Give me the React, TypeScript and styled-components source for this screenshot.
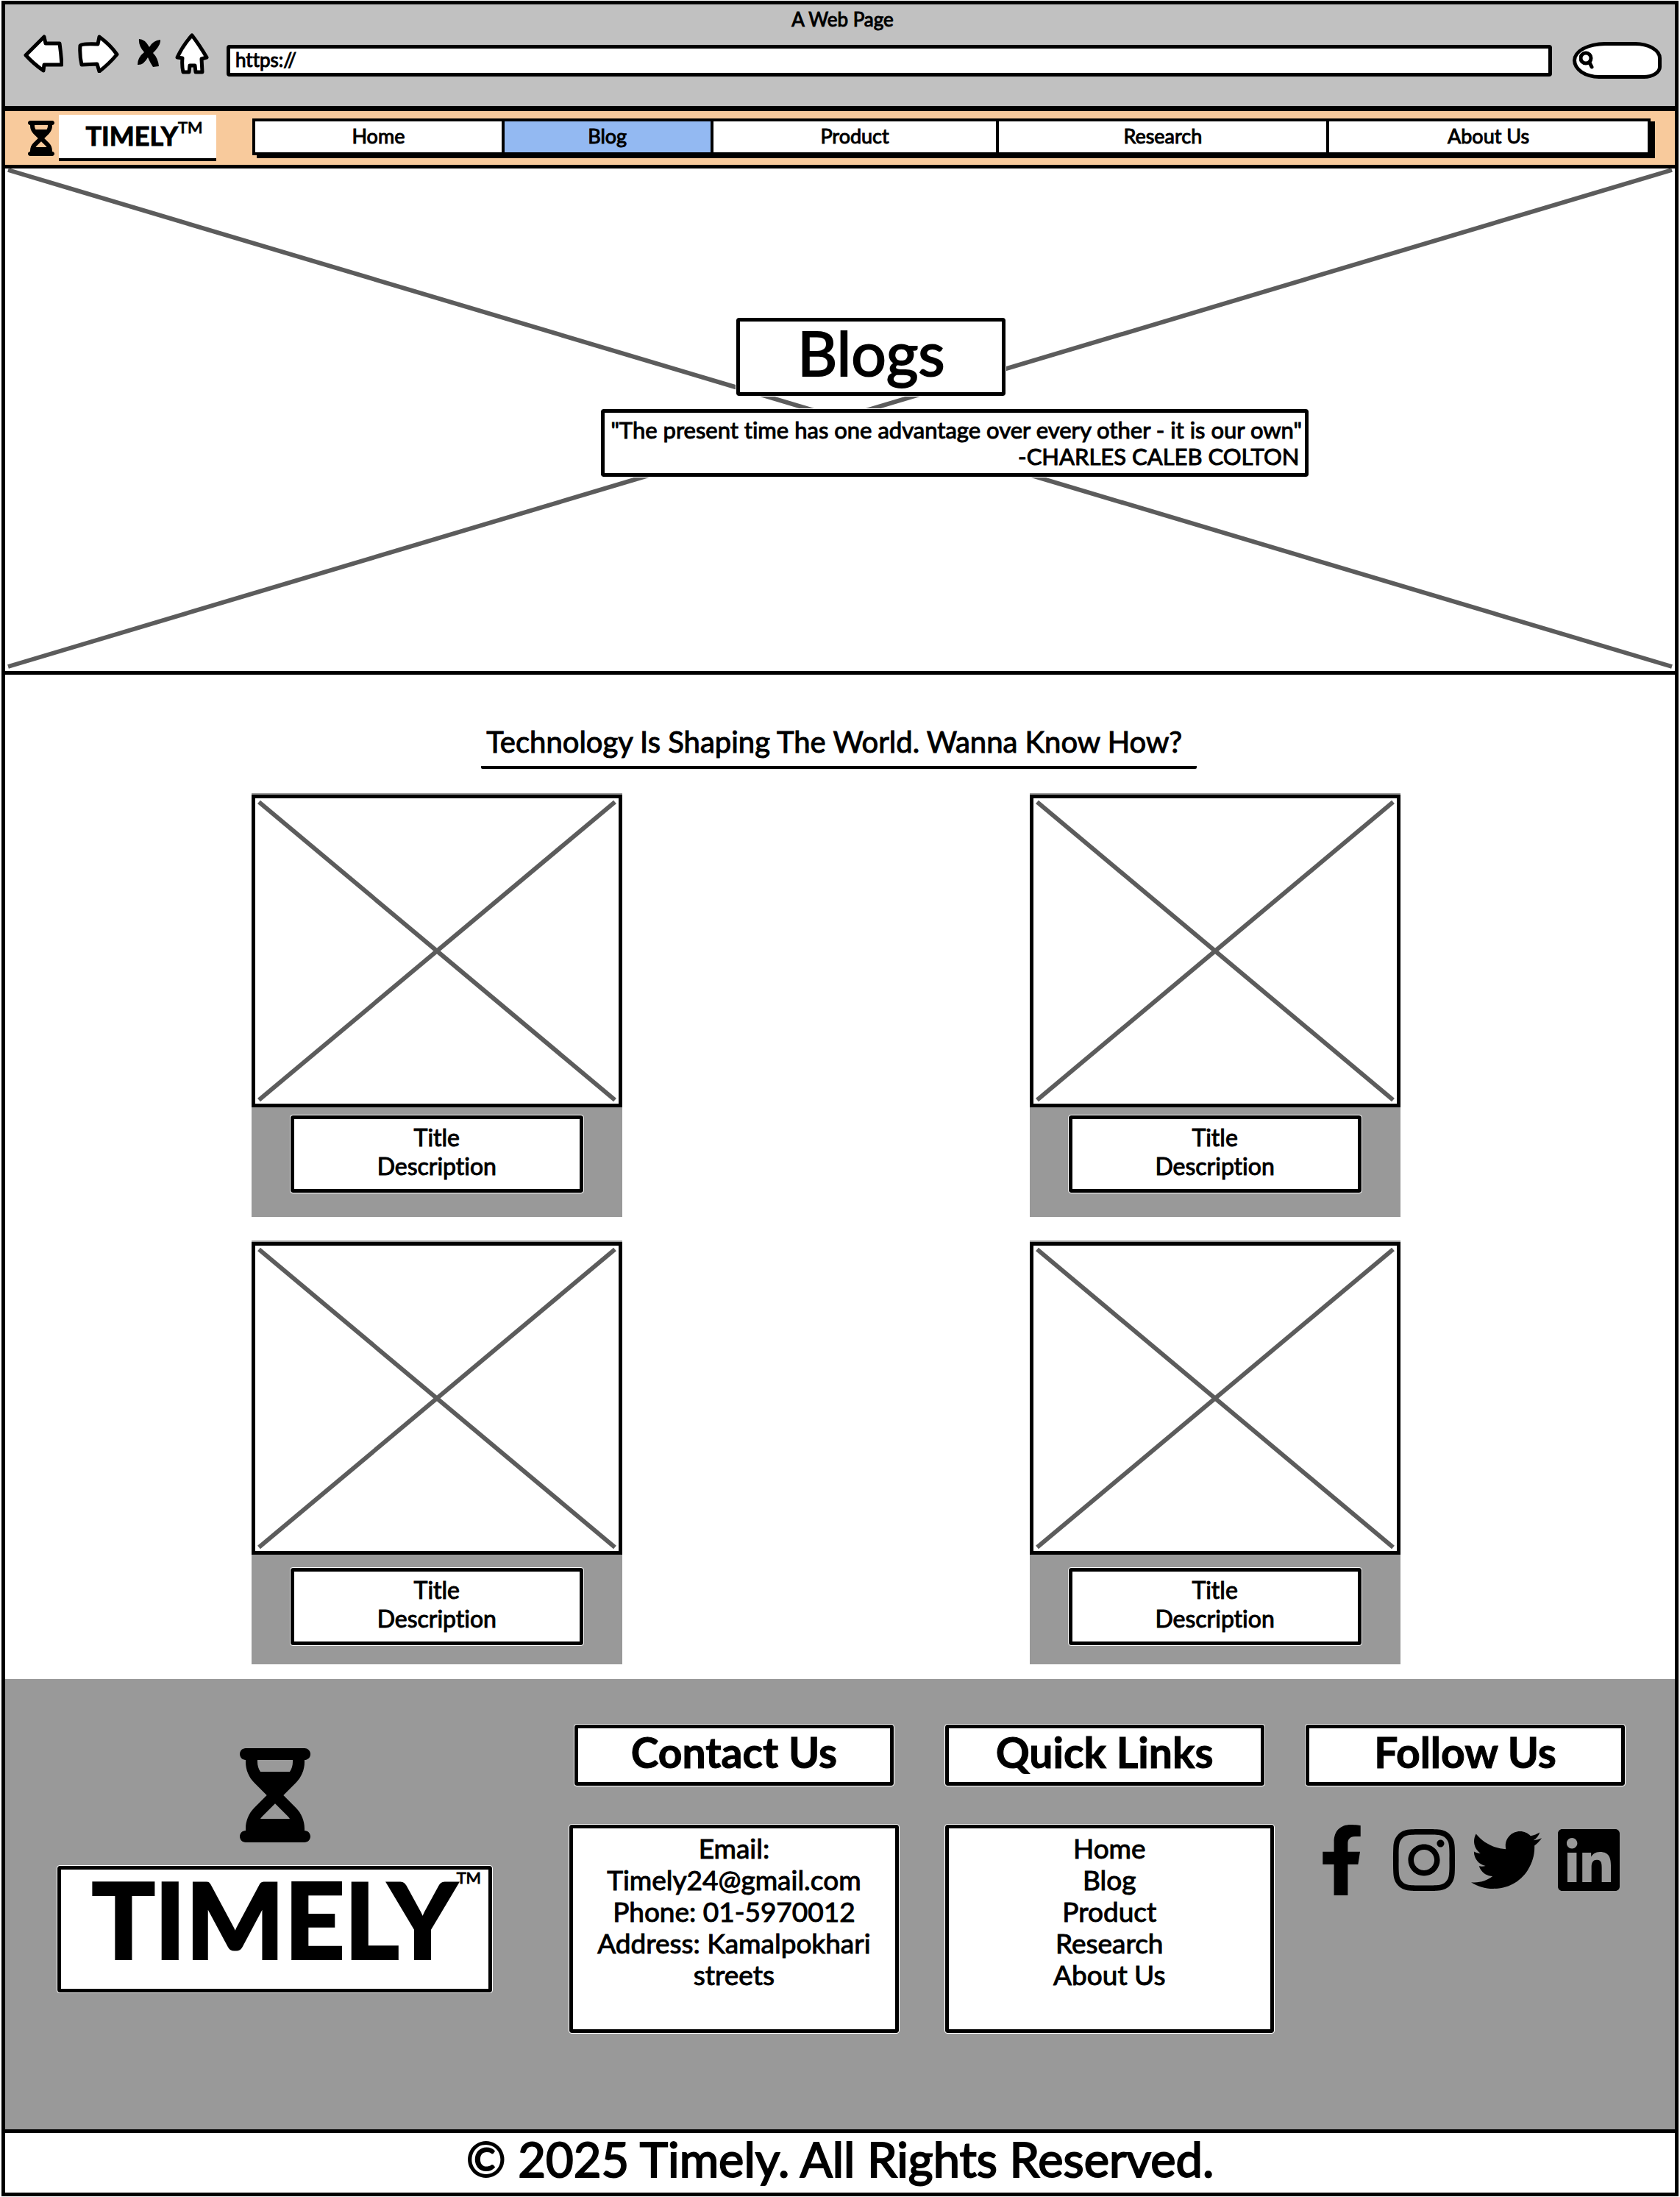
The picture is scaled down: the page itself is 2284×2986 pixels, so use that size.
import React, { useState } from 'react';
import styled, { createGlobalStyle } from 'styled-components';
import { FaHourglassHalf } from 'react-icons/fa6';
import { FaFacebookF, FaInstagram, FaTwitter, FaLinkedin } from 'react-icons/fa';

const ink = '#000';
const paper = '#fff';
const chromeGrey = '#c1c1c1';
const panelGrey = '#999';
const peach = '#f8ca9c';
const sky = '#93b9f2';
const crossGrey = '#5c5c5c';

const GlobalStyle = createGlobalStyle`
  *, *::before, *::after { box-sizing: border-box; }
  body {
    margin: 0;
    background: ${paper};
    color: ${ink};
    font-family: Lato, "Open Sans", sans-serif;
    font-weight: 400;
    font-variant-ligatures: none;
    -webkit-text-stroke: 1px ${ink};
  }
  h1, h2, h3, p, ul, blockquote { margin: 0; padding: 0; font-size: inherit; font-weight: inherit; }
  ul { list-style: none; }
  a { color: inherit; text-decoration: none; }
  button { padding: 0; border: 0; background: none; cursor: pointer; }
  input { font: inherit; color: inherit; }
`;

const Page = styled.div`
  margin: 1px 2px 0;
  border: 5px solid ${ink};
  border-bottom: 0;
`;

const Chrome = styled.header`
  padding: 4px 18px 22px 25px;
  background: ${chromeGrey};
  border-bottom: 7px solid ${ink};
`;

const PageTitle = styled.p`
  font-size: 26px;
  line-height: 32px;
  text-align: center;
`;

const Toolbar = styled.div`
  display: flex;
  align-items: center;
  height: 80px;
`;

const ToolButtons = styled.div`
  display: flex;
  align-items: center;
  gap: 20px;
  margin: 0 24px 18px 0;

  svg { display: block; }
`;

const AddressInput = styled.input`
  flex: 1;
  min-width: 0;
  height: 43px;
  padding: 0 7px 2px;
  border: 5px solid ${ink};
  border-radius: 4px;
  background: ${paper};
  font-size: 26px;
`;

const SearchBox = styled.label`
  display: flex;
  align-items: center;
  width: 121px;
  height: 50px;
  margin-left: 28px;
  padding-left: 4px;
  border: 5px solid ${ink};
  border-radius: 44px 36px 24px 36px / 25px 22px 16px 25px;
  background: ${paper};

  input {
    width: 70px;
    border: 0;
    background: none;
    font-size: 26px;
    outline: 0;
  }
`;

const NavBar = styled.nav`
  display: flex;
  align-items: center;
  height: 78px;
  padding: 0 33px 0 31px;
  background: ${peach};
  border-bottom: 5px solid ${ink};
`;

const Hourglass = styled(FaHourglassHalf)<{ $height: number }>`
  display: block;
  flex: none;
  height: ${(p) => p.$height}px;
  width: ${(p) => p.$height * 0.75}px;
`;

const Brand = styled.a`
  display: flex;
  flex: none;
  justify-content: center;
  align-items: flex-start;
  width: 214px;
  height: 63px;
  margin: 0 49px 0 6px;
  padding: 6px 0 0 18px;
  background: ${paper};
  border-bottom: 4px solid ${ink};
`;

const BrandName = styled.span<{ $size: number; $line: number; $stroke: number }>`
  font-size: ${(p) => p.$size}px;
  line-height: ${(p) => p.$line}px;
  font-weight: 700;
  -webkit-text-stroke-width: ${(p) => p.$stroke}px;
`;

const TradeMark = styled.span<{ $size: number }>`
  font-size: ${(p) => p.$size}px;
  line-height: 22px;
`;

const Menu = styled.ul`
  display: grid;
  flex: 1;
  grid-template-columns: 335fr 284fr 389fr 449fr 437fr;
  height: 50px;
  margin-bottom: 4px;
  border: 4px solid ${ink};
  box-shadow: 6px 4px 0 ${ink};
  background: ${paper};
`;

const MenuItem = styled.li<{ $active?: boolean }>`
  background: ${(p) => (p.$active ? sky : paper)};
  font-size: 27px;
  line-height: 40px;
  text-align: center;

  & + & { border-left: 4px solid ${ink}; }
  a { display: block; }
`;

const Hero = styled.section`
  position: relative;
  height: 688px;
  padding: 203px 0 0 35.7%;
  border-bottom: 5px solid ${ink};
`;

const CrossLayer = styled.div<{ $pad: string }>`
  position: absolute;
  inset: 0;
  padding: ${(p) => p.$pad};

  svg { display: block; width: 100%; height: 100%; overflow: visible; }
`;

const Panel = styled.div`
  border: 5px solid ${ink};
  border-radius: 3px;
  outline: 1px solid ${paper};
  background: ${paper};
`;

const HeroTitle = styled(Panel)`
  position: relative;
  width: 366px;
  height: 106px;
  margin: 0 0 18px 184px;

  h1 {
    font-size: 84px;
    line-height: 84px;
    text-align: center;
    -webkit-text-stroke-width: 2px;
  }
`;

const Quote = styled(Panel)`
  position: relative;
  width: 962px;
  height: 92px;
  padding: 5px 8px 0;
  font-size: 31px;
  line-height: 36px;
  text-align: right;
  white-space: nowrap;
`;

const Posts = styled.main`
  padding: 67px 16.45% 20px 14.75%;
`;

const TitleRow = styled.div`
  display: flex;
  justify-content: center;
  margin-bottom: 33px;
  padding-left: 36px;
`;

const SectionTitle = styled.h2`
  padding: 0 20px 9px 7px;
  border-bottom: 4px solid ${ink};
  border-radius: 2px;
  font-size: 40px;
  line-height: 48px;
  white-space: nowrap;
`;

const CardGrid = styled.div`
  display: grid;
  grid-template-columns: 504px 504px;
  justify-content: space-between;
  row-gap: 32px;
`;

const Card = styled.article`
  height: 576px;
  padding-top: 2px;
  background: ${panelGrey};
`;

const CardImage = styled.div`
  position: relative;
  height: 425px;
  border: 5px solid ${ink};
  background: ${paper};
`;

const CardText = styled(Panel)<{ $drop: number }>`
  width: 398px;
  height: 105px;
  margin: ${(p) => p.$drop}px auto 0;
  padding-top: 5px;
  font-size: 32px;
  line-height: 39px;
  text-align: center;
`;

const Footer = styled.footer`
  display: grid;
  grid-template-columns: 592fr 530fr 448fr 434fr;
  column-gap: 43px;
  height: 612px;
  padding: 62px 68px 0 71px;
  background: ${panelGrey};
`;

const FooterBrand = styled.div`
  display: flex;
  flex-direction: column;
  align-items: center;
  gap: 32px;
  padding-top: 32px;
`;

const BrandPanel = styled(Panel)`
  display: flex;
  justify-content: center;
  align-items: flex-start;
  width: 100%;
  height: 172px;
  padding-left: 32px;
`;

const FooterColumn = styled.div<{ $align: string; $pad?: string }>`
  display: flex;
  flex-direction: column;
  align-items: ${(p) => p.$align};
  gap: 53px;
  padding: ${(p) => p.$pad ?? '0'};
`;

const FooterHeading = styled(Panel)`
  width: 434px;
  height: 83px;

  h3 {
    font-size: 57px;
    font-weight: 700;
    line-height: 64px;
    text-align: center;
  }
`;

const FooterPanel = styled(Panel)`
  width: 100%;
  height: 283px;
  padding-top: 5px;
  font-size: 37px;
  line-height: 43px;
  text-align: center;
`;

const Socials = styled.div`
  display: grid;
  grid-template-columns: repeat(4, 96px);
  column-gap: 16px;

  a { display: flex; justify-content: center; }
  svg { height: 96px; width: auto; }
`;

const Copyright = styled.p`
  padding-bottom: 11px;
  border: solid ${ink};
  border-width: 5px 0;
  font-size: 65px;
  line-height: 70px;
  text-align: center;
  -webkit-text-stroke-width: 2px;
`;

const Cross = ({ pad }: { pad: string }) => (
  <CrossLayer $pad={pad} aria-hidden="true">
    <svg stroke={crossGrey} strokeWidth="6">
      <line x1="0" y1="0" x2="100%" y2="100%" />
      <line x1="100%" y1="0" x2="0" y2="100%" />
    </svg>
  </CrossLayer>
);

const menu = ['Home', 'Blog', 'Product', 'Research', 'About Us'];

const contact = ['Email:', 'Timely24@gmail.com', 'Phone: 01-5970012', 'Address: Kamalpokhari', 'streets'];

const drops = [11, 11, 18, 18];

const outline = { fill: paper, stroke: ink, strokeWidth: 5, strokeLinejoin: 'round' as const };

export default function App() {
  const [address, setAddress] = useState('https://');

  return (
    <>
      <GlobalStyle />
      <Page>
        <Chrome>
          <PageTitle>A Web Page</PageTitle>
          <Toolbar>
            <ToolButtons>
              <button aria-label="Back">
                <svg width="54" height="52" viewBox="0 0 54 52">
                  <path {...outline} d="M3 28 L28 3 L30 12 L49 12 Q51 26 52 41 L28 41 L27 49 Q14 40 3 28Z" />
                </svg>
              </button>
              <button aria-label="Forward">
                <svg width="56" height="52" viewBox="0 0 56 52">
                  <path {...outline} d="M3 15 Q4 12 27 13 L29 3 Q44 14 53 27 Q42 40 29 50 L26 40 L5 41 Q2 28 3 15Z" />
                </svg>
              </button>
              <button aria-label="Stop">
                <svg width="36" height="52" viewBox="0 0 36 52">
                  <path d="M7 6 Q15 6 21 17 Q26 8 36 7 Q37 14 26 25 Q33 32 34 43 L26 44 Q22 38 19 31 Q13 42 5 41 Q5 31 14 24 Q6 15 7 6Z" />
                </svg>
              </button>
              <button aria-label="Home">
                <svg width="46" height="56" viewBox="0 0 46 56">
                  <path {...outline} d="M23 3 Q33 16 43 33 L36 35 L37 53 L28 53 L27 44 L20 44 L19 53 L11 53 Q9 44 10 34 L3 33 Q11 16 23 3Z" />
                </svg>
              </button>
            </ToolButtons>
            <AddressInput aria-label="Address" value={address} onChange={(e) => setAddress(e.target.value)} />
            <SearchBox>
              <svg width="22" height="26" viewBox="0 0 22 26" fill="none" stroke={ink} strokeWidth="5" strokeLinecap="round">
                <ellipse cx="9" cy="10" rx="7" ry="7" />
                <path d="M14 16 L17 22" />
              </svg>
              <input aria-label="Search" />
            </SearchBox>
          </Toolbar>
        </Chrome>

        <NavBar>
          <Hourglass $height={48} />
          <Brand href="#home">
            <BrandName $size={36} $line={44} $stroke={1}>TIMELY</BrandName>
            <TradeMark $size={22}>TM</TradeMark>
          </Brand>
          <Menu>
            {menu.map((name) => (
              <MenuItem key={name} $active={name === 'Blog'}>
                <a href="#nav">{name}</a>
              </MenuItem>
            ))}
          </Menu>
        </NavBar>

        <Hero>
          <Cross pad="2px 4px 6px" />
          <HeroTitle>
            <h1>Blogs</h1>
          </HeroTitle>
          <Quote as="blockquote">
            <p>"The present time has one advantage over every other - it is our own"</p>
            <p>-CHARLES CALEB COLTON</p>
          </Quote>
        </Hero>

        <Posts>
          <TitleRow>
            <SectionTitle>Technology Is Shaping The World. Wanna Know How?</SectionTitle>
          </TitleRow>
          <CardGrid>
            {drops.map((drop, i) => (
              <Card key={i}>
                <CardImage>
                  <Cross pad="5px" />
                </CardImage>
                <CardText $drop={drop}>
                  <h3>Title</h3>
                  <p>Description</p>
                </CardText>
              </Card>
            ))}
          </CardGrid>
        </Posts>

        <Footer>
          <FooterBrand>
            <Hourglass $height={128} />
            <BrandPanel>
              <BrandName $size={142} $line={132} $stroke={4}>TIMELY</BrandName>
              <TradeMark $size={22}>TM</TradeMark>
            </BrandPanel>
          </FooterBrand>
          <FooterColumn $align="center" $pad="0 20px 0 62px">
            <FooterHeading><h3>Contact Us</h3></FooterHeading>
            <FooterPanel>
              {contact.map((line) => <p key={line}>{line}</p>)}
            </FooterPanel>
          </FooterColumn>
          <FooterColumn $align="flex-start">
            <FooterHeading><h3>Quick Links</h3></FooterHeading>
            <FooterPanel as="ul">
              {menu.map((name) => <li key={name}><a href="#nav">{name}</a></li>)}
            </FooterPanel>
          </FooterColumn>
          <FooterColumn $align="center">
            <FooterHeading><h3>Follow Us</h3></FooterHeading>
            <Socials>
              <a href="#facebook" aria-label="Facebook"><FaFacebookF /></a>
              <a href="#instagram" aria-label="Instagram"><FaInstagram /></a>
              <a href="#twitter" aria-label="Twitter"><FaTwitter /></a>
              <a href="#linkedin" aria-label="LinkedIn"><FaLinkedin /></a>
            </Socials>
          </FooterColumn>
        </Footer>

        <Copyright>© 2025 Timely. All Rights Reserved.</Copyright>
      </Page>
    </>
  );
}
